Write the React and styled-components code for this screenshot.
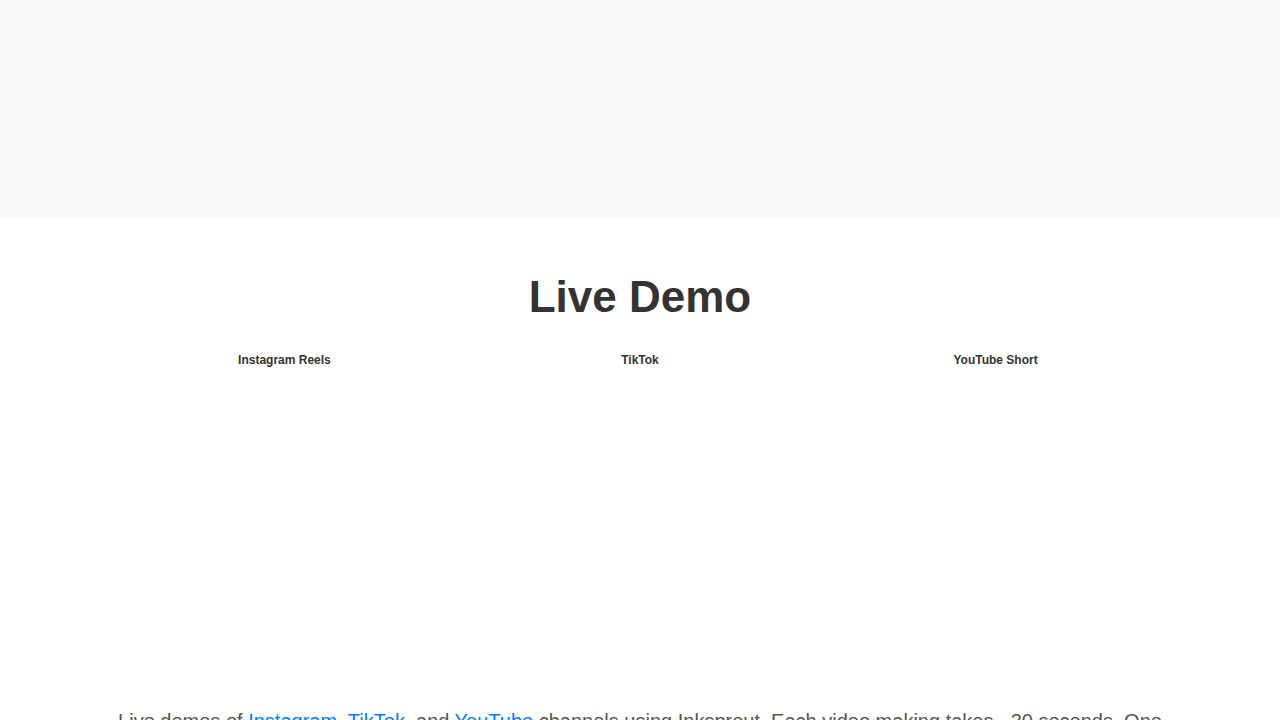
import React from 'react';
import styled, { createGlobalStyle } from 'styled-components';

const GlobalStyle = createGlobalStyle`
  * {
    box-sizing: border-box;
  }
  html {
    scrollbar-width: none;
  }
  body {
    margin: 0;
    background: #fff;
    color: #333;
    font-family: 'Liberation Sans', Arial, sans-serif;
  }
`;

const Banner = styled.section`
  height: 218px;
  background: #fafafa;
`;

const DemoSection = styled.section`
  padding: 48px calc(100% / 12) 0;
  text-align: center;
`;

const Title = styled.h2`
  margin: 0 0 22px;
  font-size: 44px;
  font-weight: bold;
  line-height: 62px;
`;

const DemoList = styled.div`
  display: grid;
  grid-template-columns: repeat(3, 1fr);
`;

const Demo = styled.div`
  min-height: 355px;
`;

const DemoTitle = styled.h3`
  margin: 0;
  font-size: 12px;
  font-weight: bold;
  line-height: 20px;
`;

const Description = styled.p`
  margin: 0;
  color: #555;
  font-size: 20px;
  line-height: 32px;
`;

const ChannelLink = styled.a`
  color: #007bff;
  text-decoration: none;
`;

const demos = ['Instagram Reels', 'TikTok', 'YouTube Short'];

function App() {
  return (
    <>
      <GlobalStyle />
      <Banner />
      <DemoSection>
        <Title>Live Demo</Title>
        <DemoList>
          {demos.map((name) => (
            <Demo key={name}>
              <DemoTitle>{name}</DemoTitle>
            </Demo>
          ))}
        </DemoList>
        <Description>
          Live demos of <ChannelLink href="#instagram">Instagram</ChannelLink>,{' '}
          <ChannelLink href="#tiktok">TikTok</ChannelLink>, and{' '}
          <ChannelLink href="#youtube">YouTube</ChannelLink> channels using
          Inksprout. Each video making takes ~30 seconds. One
        </Description>
      </DemoSection>
    </>
  );
}

export default App;
